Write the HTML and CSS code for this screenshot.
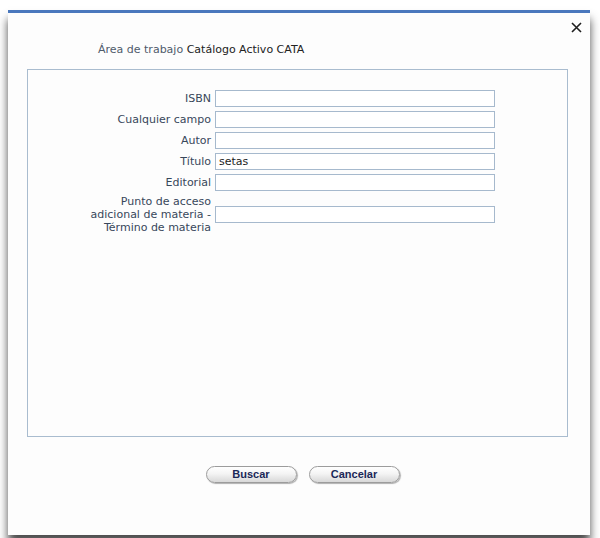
FILE: index.html
```html
<!DOCTYPE html>
<html lang="es">
<head>
<meta charset="utf-8">
<title>Búsqueda</title>
<link rel="stylesheet" href="styles.css">
</head>
<body>
<div class="dialog">
  <button class="close" type="button" aria-label="Cerrar">
    <svg width="11" height="11" viewBox="0 0 11 11"><path d="M1 1 L10 10 M10 1 L1 10" stroke="#1e1e1e" stroke-width="1.6" fill="none"/></svg>
  </button>
  <div class="title"><span class="muted">Área de trabajo</span> Catálogo Activo CATA</div>
  <div class="panel">
    <form class="grid">
      <label class="lbl" for="f1">ISBN</label><input class="field" id="f1" type="text">
      <label class="lbl" for="f2">Cualquier campo</label><input class="field" id="f2" type="text">
      <label class="lbl" for="f3">Autor</label><input class="field" id="f3" type="text">
      <label class="lbl" for="f4">Título</label><input class="field" id="f4" type="text" value="setas">
      <label class="lbl" for="f5">Editorial</label><input class="field" id="f5" type="text">
      <label class="lbl" for="f6">Punto de acceso adicional de materia - Término de materia</label><input class="field" id="f6" type="text">
    </form>
  </div>
  <div class="actions">
    <button class="btn" type="button">Buscar</button>
    <button class="btn" type="button">Cancelar</button>
  </div>
</div>
</body>
</html>
```
FILE: styles.css
```css
html, body {
  margin: 0;
  padding: 0;
  background: #ffffff;
  height: 538px;
  overflow: hidden;
}
body {
  padding: 10px 0 0 8px;
  box-sizing: border-box;
  font-family: "DejaVu Sans", Verdana, sans-serif;
  font-size: 11px;
}
.dialog {
  position: relative;
  width: 582px;
  height: 525px;
  box-sizing: border-box;
  border-top: 3px solid #4a78bd;
  background: #fdfdfd;
  box-shadow: 0 9px 9px 0 rgba(0, 0, 0, 0.7);
  padding-top: 30px;
}
.close {
  position: absolute;
  top: 9px;
  right: 8px;
  width: 11px;
  height: 11px;
  padding: 0;
  border: 0;
  background: transparent;
  display: block;
}
.close svg { display: block; }
.title {
  padding-left: 90px;
  line-height: 13px;
  color: #222222;
}
.title .muted { color: #4f5b6b; }
.panel {
  margin: 13px 0 0 19px;
  width: 541px;
  height: 368px;
  box-sizing: border-box;
  border: 1px solid #a9bccf;
  background: #fdfdfd;
  padding: 20px 0 0 60px;
}
.grid {
  display: grid;
  grid-template-columns: 123px 280px;
  column-gap: 4px;
  row-gap: 4px;
  align-items: center;
  margin: 0;
}
.lbl {
  text-align: right;
  color: #38475b;
  line-height: 13px;
}
.field {
  box-sizing: border-box;
  width: 280px;
  height: 17px;
  margin: 0;
  border: 1px solid #a6b9cd;
  background: #ffffff;
  padding: 0 3px;
  font-family: "DejaVu Sans", Verdana, sans-serif;
  font-size: 11px;
  color: #1c1c1c;
  outline: none;
}
.actions {
  display: flex;
  justify-content: center;
  gap: 12px;
  margin-top: 29px;
  padding-left: 7px;
}
.btn {
  width: 91px;
  height: 17px;
  box-sizing: border-box;
  border: 1px solid #9c9c9c;
  border-radius: 9px;
  background: linear-gradient(#ffffff 0%, #f4f4f4 45%, #d8d8d8 100%);
  box-shadow: 1px 1px 1px rgba(0, 0, 0, 0.3);
  font-family: "Liberation Sans", Arial, sans-serif;
  font-weight: bold;
  font-size: 11px;
  color: #1b2858;
  padding: 0;
  line-height: 15px;
}
```
